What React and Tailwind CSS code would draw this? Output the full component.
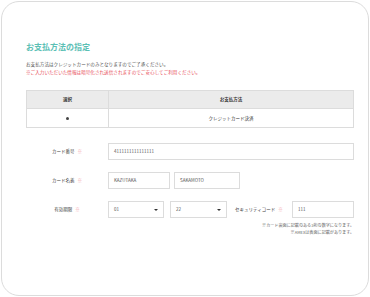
export default function App() {
  const font = { fontFamily: '"Noto Sans CJK JP", "Noto Sans", sans-serif' };
  const Req = () => <span className="text-[#f2a0a8] ml-[3px]">※</span>;
  const Caret = () => (
    <span className="w-0 h-0 border-l-[2px] border-r-[2px] border-t-[2.5px] border-l-transparent border-r-transparent border-t-[#333]" />
  );
  return (
    <div className="w-[370px] h-[297px] bg-white p-px" style={font}>
      <div className="h-full border border-[#dcdcdc] rounded-[18px] pl-[24px] pr-[14px] pt-[39px] flex flex-col">
        <div className="text-[8px] leading-[12px] font-bold text-[#5cc0b5]">お支払方法の指定</div>
        <div className="mt-[7px] text-[4.6px] leading-[8px] text-[#555]">
          お支払方法はクレジットカードのみとなりますのでご了承ください。
        </div>
        <div className="text-[4.6px] leading-[8px] text-[#e8505b]">
          ※ご入力いただいた情報は暗号化され送信されますのでご安心してご利用ください。
        </div>

        <div className="mt-[14px] border border-[#dcdcdc] text-[4.5px] text-[#333]">
          <div className="grid grid-cols-[81px_1fr] h-[17px] bg-[#ebebeb] font-bold">
            <div className="flex items-center justify-center">選択</div>
            <div className="flex items-center justify-center border-l border-[#dcdcdc]">お支払方法</div>
          </div>
          <div className="grid grid-cols-[81px_1fr] h-[19px] border-t border-[#dcdcdc]">
            <div className="flex items-center justify-center">
              <span className="w-[3px] h-[3px] rounded-full bg-[#444]" />
            </div>
            <div className="flex items-center justify-center border-l border-[#dcdcdc]">クレジットカード決済</div>
          </div>
        </div>

        <div className="mt-[15px] flex flex-col gap-[12px] text-[4.5px] text-[#444]">
          <div className="flex items-center">
            <div className="w-[82px] text-center">カード番号<Req /></div>
            <div className="flex-1 h-[17px] border border-[#dcdcdc] flex items-center pl-[5px] text-[#555]">4111111111111111</div>
          </div>
          <div className="flex items-center">
            <div className="w-[82px] text-center">カード名義<Req /></div>
            <div className="flex gap-[4px]">
              <div className="w-[62px] h-[17px] border border-[#dcdcdc] flex items-center pl-[5px] text-[#555]">KAZUTAKA</div>
              <div className="w-[66px] h-[17px] border border-[#dcdcdc] flex items-center pl-[5px] text-[#555]">SAKAMOTO</div>
            </div>
          </div>
          <div className="flex items-center">
            <div className="w-[82px] text-center">有効期限<Req /></div>
            <div className="flex gap-[6px]">
              <div className="w-[56px] h-[17px] border border-[#dcdcdc] flex items-center justify-between pl-[5px] pr-[5px] text-[#555]">
                <span>01</span>
                <Caret />
              </div>
              <div className="w-[57px] h-[17px] border border-[#dcdcdc] flex items-center justify-between pl-[5px] pr-[5px] text-[#555]">
                <span>22</span>
                <Caret />
              </div>
            </div>
            <div className="ml-[8px] flex-1 flex items-center justify-between">
              <div>セキュリティコード<Req /></div>
              <div className="w-[62px] h-[17px] border border-[#dcdcdc] flex items-center pl-[5px] text-[#555]">111</div>
            </div>
          </div>
        </div>
        <div className="mt-[4px] flex flex-col items-end text-[4.1px] leading-[7px] text-[#666]">
          <div>※カード裏面に記載のある3桁の数字になります。</div>
          <div>※AMEXは表面に記載があります。</div>
        </div>
      </div>
    </div>
  );
}
